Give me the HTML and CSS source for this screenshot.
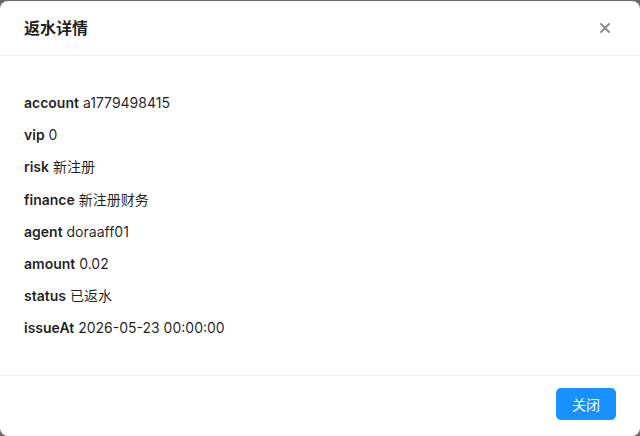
FILE: index.html
```html
<!DOCTYPE html>
<html lang="zh">
<head>
<meta charset="utf-8">
<title>返水详情</title>
<link rel="stylesheet" href="styles.css">
</head>
<body>
<div class="modal">
  <div class="modal-header">
    <div class="modal-title">返水详情</div>
    <button class="modal-close" aria-label="Close">
      <svg width="12" height="12" viewBox="0 0 12 12"><path d="M2 2L10 10M10 2L2 10" stroke="#8c8c8c" stroke-width="2" stroke-linecap="round"/></svg>
    </button>
  </div>
  <div class="modal-body">
    <p class="row"><b>account</b> a1779498415</p>
    <p class="row"><b>vip</b> 0</p>
    <p class="row"><b>risk</b> 新注册</p>
    <p class="row"><b>finance</b> 新注册财务</p>
    <p class="row"><b>agent</b> doraaff01</p>
    <p class="row"><b>amount</b> 0.02</p>
    <p class="row"><b>status</b> 已返水</p>
    <p class="row"><b>issueAt</b> 2026-05-23 00:00:00</p>
  </div>
  <div class="modal-footer">
    <button class="btn-primary">关闭</button>
  </div>
</div>
</body>
</html>
```
FILE: styles.css
```css
html, body {
  margin: 0;
  padding: 0;
  height: 100%;
}
body {
  background: #6b6b6b;
  font-family: "Inter", "Noto Sans CJK SC", sans-serif;
  color: rgba(0, 0, 0, 0.88);
  font-size: 14px;
  overflow: hidden;
}
.modal {
  margin-top: 1px;
  height: 435px;
  background: #fff;
  border-radius: 8px;
  display: flex;
  flex-direction: column;
  box-sizing: border-box;
}
.modal-header {
  height: 54px;
  padding: 0 24px;
  display: flex;
  align-items: center;
  justify-content: space-between;
  border-bottom: 1px solid #f0f0f0;
}
.modal-title {
  font-size: 16px;
  font-weight: 600;
  line-height: 22px;
  color: rgba(0, 0, 0, 0.88);
}
.modal-close {
  border: 0;
  background: none;
  padding: 0;
  margin-right: 5px;
  width: 12px;
  height: 12px;
  display: flex;
  cursor: pointer;
}
.modal-body {
  flex: 1;
  padding: 36px 24px 0;
}
.row {
  margin: 0 0 10.2px;
  line-height: 22px;
}
.row b {
  font-weight: 600;
}
.modal-footer {
  border-top: 1px solid #f0f0f0;
  padding: 12px 24px 0;
  height: 61px;
  box-sizing: border-box;
  display: flex;
  justify-content: flex-end;
  align-items: flex-start;
}
.btn-primary {
  width: 60px;
  height: 32px;
  border: 0;
  border-radius: 5px;
  background: #1890ff;
  color: #fff;
  font-family: "Inter", "Noto Sans CJK SC", sans-serif;
  font-size: 14px;
  padding: 0;
  cursor: pointer;
}
```
